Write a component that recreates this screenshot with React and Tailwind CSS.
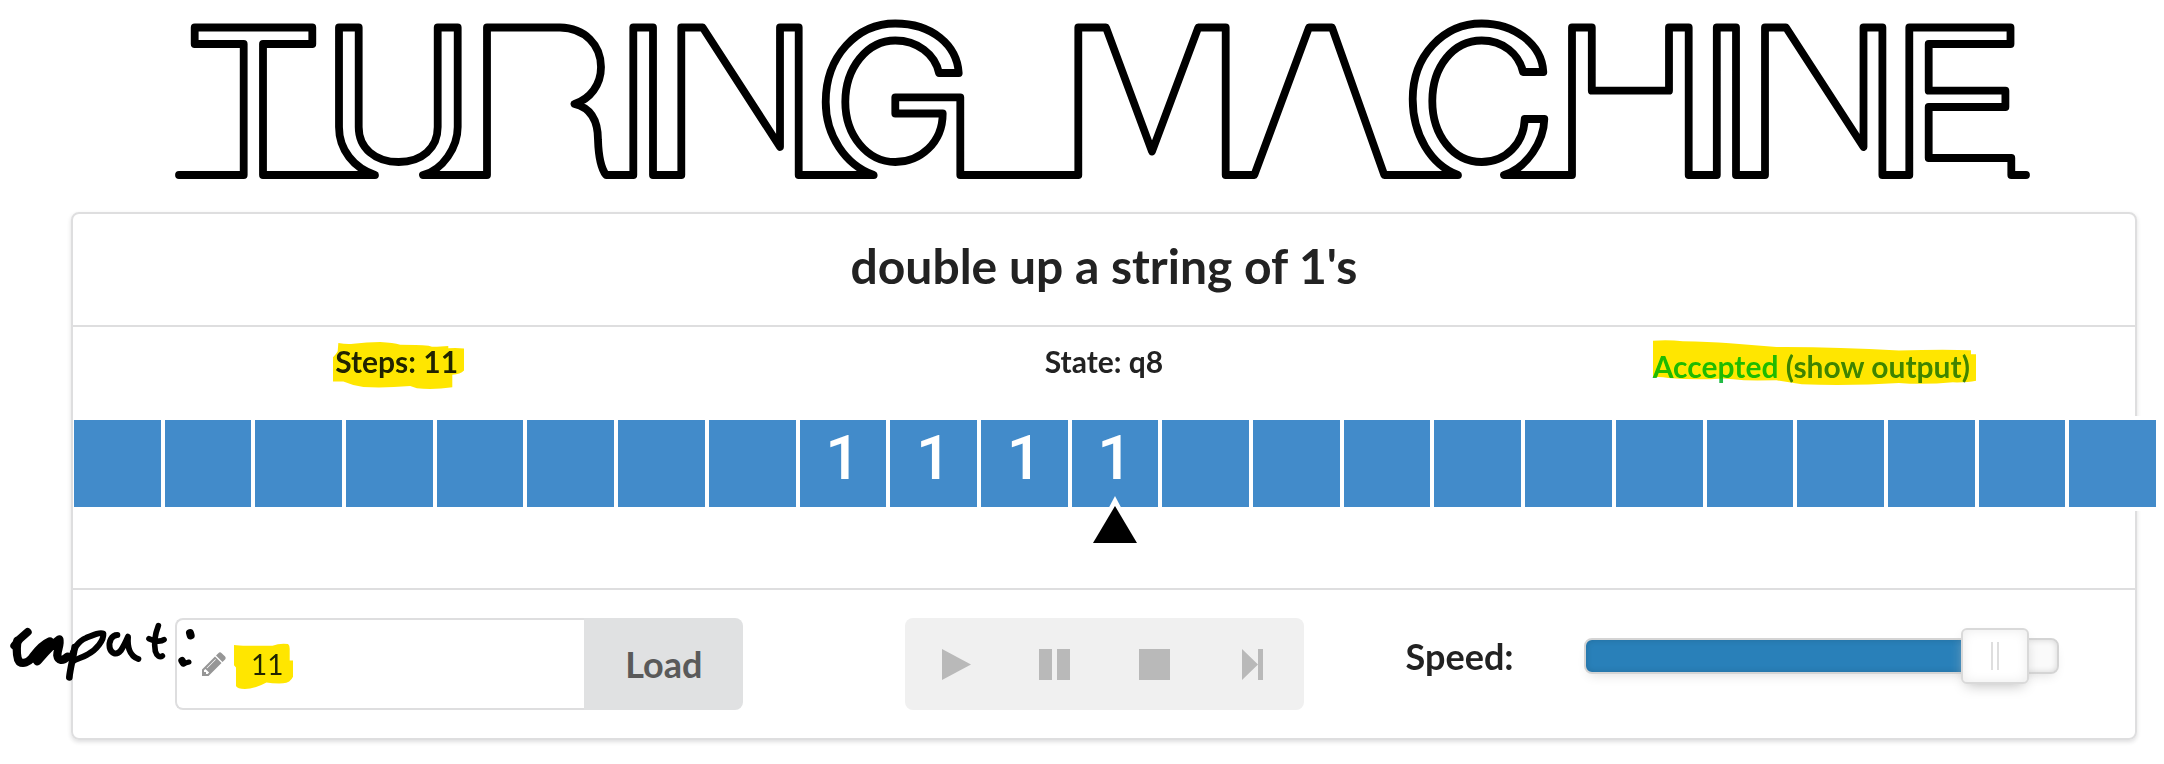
import { useState } from "react";

const ROOT_FONT = "font-[Lato,'Liberation_Sans',sans-serif]";

const LINE =
  "M179 175H243.7V44H194.7V27.5H312.3V44H263V175H375C354 168 339 150 339 127V27.5H358.7V127C358.7 148 375 162 398.7 162C422 162 437.7 148 437.7 127V27.5H457.7V127C457.7 147 443 170 423 175H487V27.5H560C585 28 601 45 601 67C601 85 590 99 574.5 104C592 108 598 122 598 140C598.5 155 600 167 606 175H633.3V27.5H653V175H681.3V27.5H702.7L780 147V27.5H798.7V175H873.7C845 165 825.7 135 825.7 102C825.7 56 857 23.5 895.3 23.5C932 23.5 957 45 958.7 73H939C935 54 917 40.5 895.3 40.5C867 40.5 845.3 68 845.3 102C845.3 135 867 162 895.3 162C920 162 942.7 143 942.7 113.5H895.3V97.3H960.3V175H1078.3V27.5H1106L1152 151.5L1198.3 27.5H1225.7V175H1254.3L1309 27.5H1332L1384.3 175H1458C1431 165 1412.7 135 1412.7 99C1412.7 56 1443 23.5 1481.7 23.5C1514 23.5 1542 44 1543.3 72H1523C1519 54 1503 40.5 1481.7 40.5C1453 40.5 1432.3 67 1432.3 101C1432.3 135 1453 162 1481.7 162C1506 162 1524 143 1524.7 119H1544.3C1544 141 1527 168 1504 175H1572V27.5H1591.8V90.7H1669V27.5H1688.7V175H1716.8V27.5H1736V175H1765V27.5H1786L1863.5 147V27.5H1882.4V175H1909.3V27.5H2010.5V44H1928.7V90.7H2005.4V107H1928.7V158H2011.3V175H2026";

function Logo() {
  return (
    <svg
      viewBox="0 0 2164 212"
      className="block w-full"
      role="img"
      aria-label="Turing Machine"
    >
      <path
        d={LINE}
        fill="none"
        stroke="#000"
        strokeWidth="7.8"
        strokeLinecap="round"
        strokeLinejoin="round"
      />
    </svg>
  );
}

function Marker({ className, viewBox, d }) {
  return (
    <svg
      aria-hidden="true"
      viewBox={viewBox}
      preserveAspectRatio="none"
      className={`pointer-events-none absolute mix-blend-darken ${className}`}
    >
      <path d={d} fill="#ffe600" />
    </svg>
  );
}

function Pencil() {
  return (
    <svg viewBox="0 0 1536 1536" className="size-6 shrink-0" fill="#969696" aria-hidden="true">
      <path d="M363 1408l91-91-235-235-91 91v107h128v128h107zM886 480q0-22-22-22-10 0-17 7l-542 542q-7 7-7 17 0 22 22 22 10 0 17-7l542-542q7-7 7-17zM832 288l416 416-832 832h-416v-416zM1515 384q0 53-37 90l-166 166-416-416 166-165q36-38 90-38 53 0 91 38l235 234q37 39 37 91z" />
    </svg>
  );
}

function Ink() {
  return (
    <svg
      viewBox="0 0 600 228"
      className="pointer-events-none absolute -left-[73px] top-[22px] h-[76px] w-[200px]"
      fill="none"
      stroke="#000"
      strokeLinecap="round"
      strokeLinejoin="round"
      role="img"
      aria-label="input:"
    >
      <path strokeWidth="24" d="M83 60L60 80L43 101" />
      <path
        strokeWidth="25"
        d="M52 86C49 115 49 138 58 149C70 157 85 150 96 138C108 122 122 100 150 88C145 104 120 128 112 148C128 130 150 102 178 82C182 97 172 112 172 130C174 146 188 148 203 134"
      />
      <path strokeWidth="20" d="M224 105C222 130 211 165 208 196" />
      <path
        strokeWidth="18"
        d="M214 140C218 112 236 86 258 78C275 71 300 59 310 65C312 84 290 114 262 128C245 138 228 140 216 150"
      />
      <path
        strokeWidth="18"
        d="M352 69C334 69 326 90 329 107C333 125 350 131 362 116C372 102 378 88 384 74C382 98 386 131 415 141"
      />
      <path strokeWidth="17" d="M475 41C466 64 462 96 466 118C470 132 480 137 487 132M447 80C462 88 482 90 492 83" />
      <path strokeWidth="24" d="M570 63L572 70" />
      <path strokeWidth="22" d="M546 146L550 153" />
      <path strokeWidth="15" d="M550 155L567 150" />
    </svg>
  );
}

const CELLS = Array.from({ length: 23 }, (_, i) => (i >= 8 && i <= 11 ? "1" : ""));
const HEAD = 11;

function Tape() {
  return (
    <div className="relative -mr-[22px] grid grid-cols-[repeat(23,minmax(0,1fr))] gap-1 bg-white py-1 pl-px pr-px">
      {CELLS.map((symbol, i) => (
        <div
          key={i}
          className="relative flex h-[87px] justify-center bg-[#428bca] pt-1 font-[Roboto,'Liberation_Sans',sans-serif] text-[62px] font-medium leading-[68px] text-white"
        >
          {symbol}
          {i === HEAD && (
            <svg
              viewBox="0 0 56 52"
              className="absolute left-1/2 top-[75px] h-[52px] w-[56px] -translate-x-1/2"
              aria-hidden="true"
            >
              <path d="M28 1L38 20H18Z" fill="#fff" />
              <path d="M28 11L50 48H6Z" fill="#000" />
            </svg>
          )}
        </div>
      ))}
    </div>
  );
}

function Status() {
  return (
    <div className="-mx-[30px] grid grid-cols-3 text-[30px] font-bold leading-[44px]">
      <p className="text-center">
        <span className="relative inline-block">
          Steps: 11
          <Marker
            className="-left-[2px] top-[3px] h-[47px] w-[131px]"
            viewBox="99 66 392 142"
            d="M99 185V112Q108 104 113 94L115 69Q140 73 160 71Q200 66 240 66Q280 68 300 74Q350 74 385 77Q400 82 410 80L444 78V85Q470 83 491 86V152Q480 163 456 165V203Q400 211 350 206L330 199Q250 206 190 202Q160 198 130 185Z"
          />
        </span>
      </p>
      <p className="text-center">State: q8</p>
      <p className="pt-[5px] text-center">
        <span className="relative inline-block">
          <span className="text-[#21ba45]">Accepted</span>{" "}
          <a href="#output" className="text-[#4183c4]">
            (show output)
          </a>
          <Marker
            className="-top-[4px] left-0 h-[45px] w-[323px]"
            viewBox="147 61 897 136"
            d="M147 63Q190 59 230 65Q300 66 360 71L490 82Q650 81 830 93Q950 88 1030 92V104H1044V184Q1020 190 980 189Q900 197 830 191Q700 200 560 195L490 183Q430 184 400 183Q370 178 340 177Q270 183 190 176Q165 171 147 174Z"
          />
        </span>
      </p>
    </div>
  );
}

const TRANSPORT = [
  { label: "Run", d: "M4 1V32L33 16.5Z" },
  { label: "Pause", d: "M2 1H15V32H2ZM20 1H33V32H20Z" },
  { label: "Stop", d: "M2 1H33V32H2Z" },
  { label: "Step", d: "M6 1L22 16.5L6 32ZM22 1H27V32H22Z" },
];

function Controls() {
  const [speed, setSpeed] = useState(93);
  const [tape, setTape] = useState("11");
  return (
    <div className="relative grid grid-cols-[minmax(0,730fr)_minmax(0,500fr)_minmax(0,831fr)] py-7">
      <form className="flex h-[92px] pl-[102px] pr-[60px]" onSubmit={(e) => e.preventDefault()}>
        <label
          htmlFor="tape-input"
          className="relative flex min-w-0 flex-1 items-center rounded-l-lg border-2 border-r-0 border-[#dededf] pl-[25px]"
        >
          <Pencil />
          <input
            id="tape-input"
            aria-label="Input"
            value={tape}
            onChange={(e) => setTape(e.target.value)}
            className="h-full min-w-0 flex-1 bg-transparent pl-[25px] text-[28px] text-[#222] outline-none"
          />
          <Marker
            className="left-[57px] top-[23px] h-[46px] w-[59px]"
            viewBox="702 188 178 139"
            d="M702 194Q720 197 760 196H818Q840 188 865 191Q870 195 870 205V241H880V290Q872 308 850 310Q820 311 800 307Q765 326 735 327Q712 327 708 318V262L702 255Z"
          />
        </label>
        <button
          type="submit"
          className="w-[159px] rounded-r-lg bg-[#e0e1e2] text-[36px] font-bold text-[#5a5a5a]"
        >
          Load
        </button>
      </form>
      <div className="pl-[102px]">
        <div className="grid h-[92px] grid-cols-4 overflow-hidden rounded-lg bg-[#f0f0f0]">
          {TRANSPORT.map((b) => (
            <button key={b.label} type="button" aria-label={b.label} className="flex items-center justify-center">
              <svg viewBox="0 0 35 33" className="h-[33px] w-[35px]" fill="#b9b9b9" aria-hidden="true">
                <path d={b.d} />
              </svg>
            </button>
          ))}
        </div>
      </div>
      <div className="mt-[10px] flex h-[56px] items-center pl-[102px] pr-[76px]">
        <label htmlFor="speed" className="mr-[70px] text-[36px] font-bold leading-[56px]">
          Speed:
        </label>
        <input
          id="speed"
          type="range"
          min="0"
          max="100"
          value={speed}
          onChange={(e) => setSpeed(Number(e.target.value))}
          style={{
            backgroundImage: `linear-gradient(to right, #2980b9 ${speed}%, #fafafa ${speed}%)`,
          }}
          className="h-9 min-w-0 flex-1 appearance-none rounded-lg border-2 border-[#d4d4d4] bg-origin-border shadow-[inset_0_0_6px_rgba(0,0,0,0.15),0_6px_12px_-5px_#ddd] outline-none [&::-webkit-slider-thumb]:h-[56px] [&::-webkit-slider-thumb]:w-[68px] [&::-webkit-slider-thumb]:appearance-none [&::-webkit-slider-thumb]:rounded-md [&::-webkit-slider-thumb]:border-2 [&::-webkit-slider-thumb]:border-[#d9d9d9] [&::-webkit-slider-thumb]:bg-white [&::-webkit-slider-thumb]:bg-[linear-gradient(to_right,#dedede_2px,transparent_2px,transparent_6px,#dedede_6px)] [&::-webkit-slider-thumb]:bg-[length:8px_28px] [&::-webkit-slider-thumb]:bg-center [&::-webkit-slider-thumb]:bg-no-repeat [&::-webkit-slider-thumb]:shadow-[inset_0_0_12px_#ebebeb,0_6px_14px_-5px_#bbb]"
        />
      </div>
      <Ink />
    </div>
  );
}

export default function App() {
  return (
    <div className={`min-h-screen overflow-x-hidden bg-white pb-6 text-[#222] ${ROOT_FONT}`}>
      <h1>
        <Logo />
      </h1>
      <main className="ml-[71px] mr-[27px] rounded-lg border-2 border-[#dededf] shadow-[0_2px_4px_rgba(34,36,38,0.15)]">
        <h2 className="flex h-[111px] items-center justify-center pb-2 text-[48px] font-bold">
          double up a string of 1's
        </h2>
        <section className="border-y-2 border-[#dededf] pb-[77px] pt-3">
          <Status />
          <div className="pt-7">
            <Tape />
          </div>
        </section>
        <Controls />
      </main>
    </div>
  );
}
